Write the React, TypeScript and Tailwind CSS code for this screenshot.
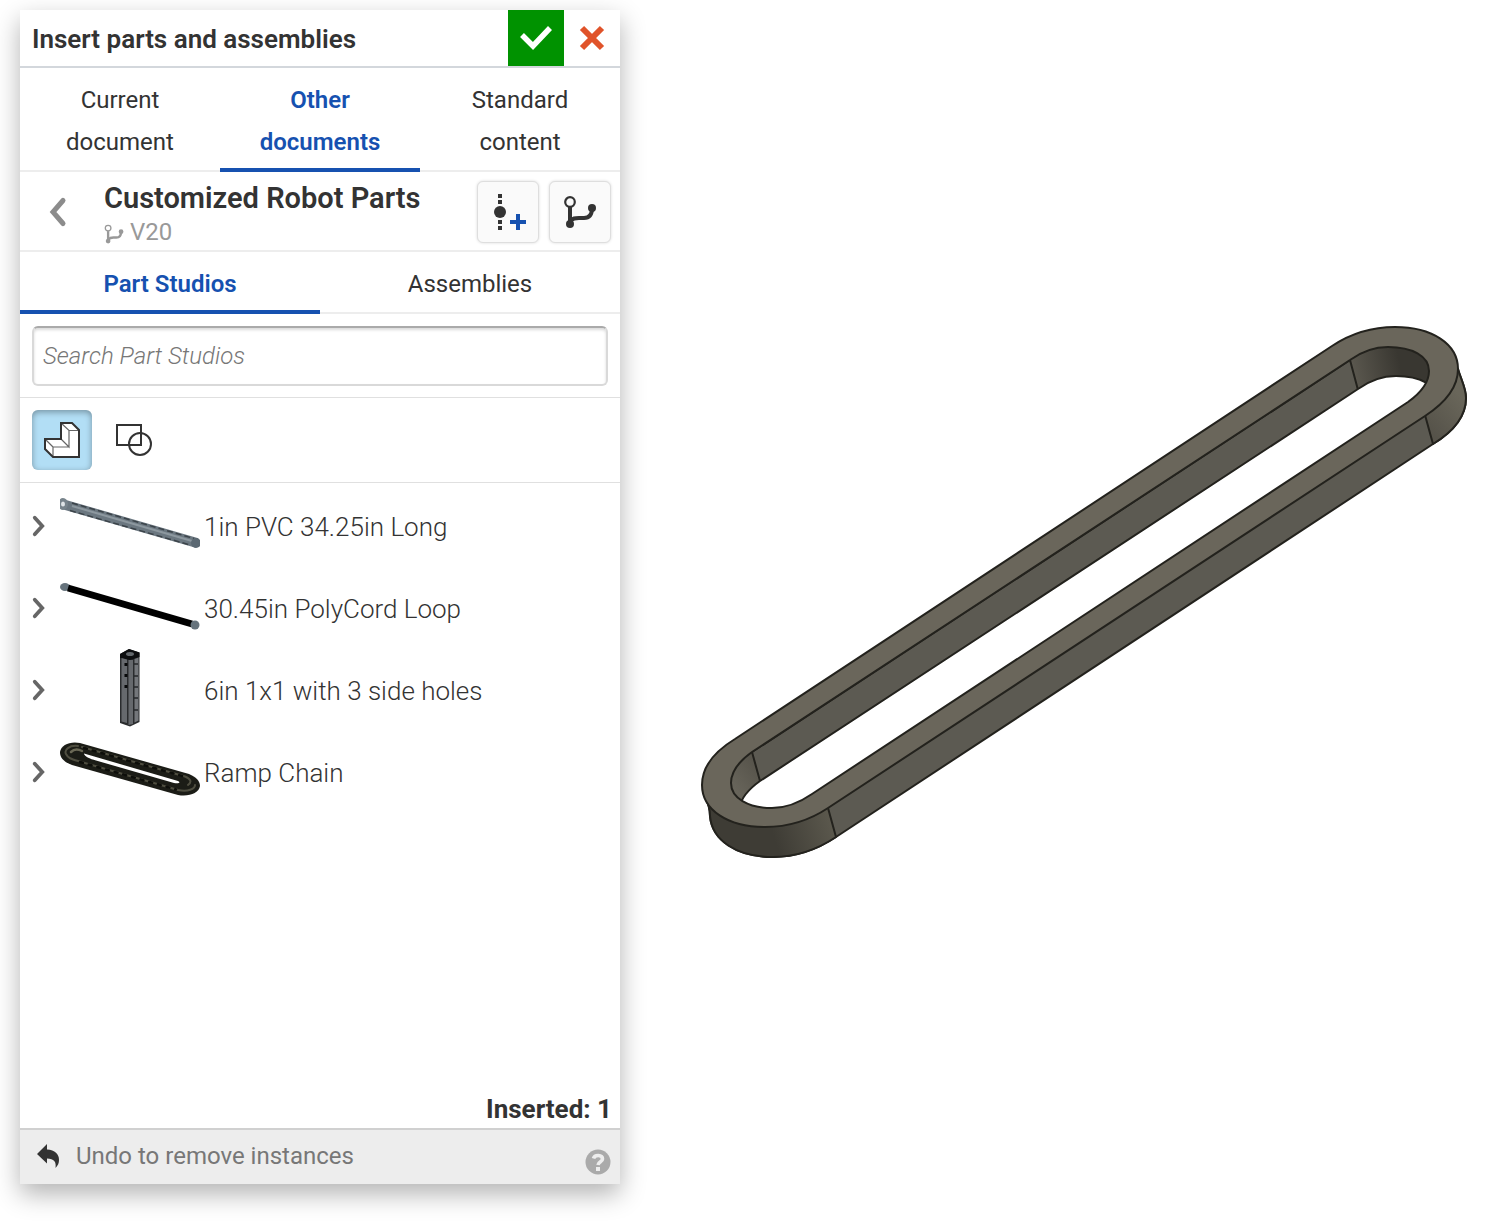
import React, { useState } from "react";

function CheckIcon() {
  return (
    <svg viewBox="0 0 56 56" className="size-14" aria-hidden="true">
      <path d="M14 25 25 36 42 18" fill="none" stroke="#fff" strokeWidth="5.500" />
    </svg>
  );
}

function CrossIcon() {
  return (
    <svg viewBox="0 0 56 56" className="size-14" aria-hidden="true">
      <path d="M18 18 38 38M38 18 18 38" stroke="#e0532a" strokeWidth="6" />
    </svg>
  );
}

function BranchIcon({ className }: { className?: string }) {
  return (
    <svg viewBox="0 0 32 34" className={className} fill="none" stroke="currentColor" aria-hidden="true">
      <circle cx="6" cy="7" r="4.800" strokeWidth="2.200" />
      <path d="M6 12V29" strokeWidth="4" />
      <path d="M6 26.500C9 23.200 11 23 15 23H20C25.500 23 28 20 28 13" strokeWidth="4" />
      <circle cx="6" cy="29" r="4" fill="currentColor" stroke="none" />
      <circle cx="28" cy="13" r="4" fill="currentColor" stroke="none" />
    </svg>
  );
}

function CreateVersionIcon() {
  return (
    <svg viewBox="0 0 60 60" className="size-[60px]" aria-hidden="true">
      <path d="M20 12h4v4h-4zM20 18h4v4h-4zM20 38h4v4h-4zM20 44h4v4h-4z" fill="#333" />
      <circle cx="22" cy="30" r="6" fill="#333" />
      <path d="M32 40H48M40 32V48" stroke="#1651b0" strokeWidth="4" />
    </svg>
  );
}

function PartIcon() {
  return (
    <svg viewBox="0 0 60 60" className="size-[60px]" aria-hidden="true" fill="none">
      <path d="M29 13H40L47 20V47H21L13 39V29H29Z" fill="#fff" />
      <path d="M29 13 37 20.500H47M37 20.500V37L29 29M37 37H21V47M21 37 13 29" stroke="#666" strokeWidth="1.200" />
      <path d="M29 13H40L47 20V47H21L13 39V29H29Z" stroke="#333" strokeWidth="2" />
    </svg>
  );
}

function SketchIcon() {
  return (
    <svg viewBox="0 0 60 60" className="size-[60px]" aria-hidden="true" fill="none" stroke="#333" strokeWidth="2">
      <path d="M13 15H37V35H13Z" />
      <circle cx="36" cy="34" r="11" />
    </svg>
  );
}

function Chevron({ className, d }: { className: string; d: string }) {
  return (
    <svg viewBox="0 0 20 32" className={className} aria-hidden="true">
      <path d={d} fill="none" stroke="currentColor" strokeLinecap="round" strokeWidth="5" />
    </svg>
  );
}

function PipeThumb() {
  return (
    <svg viewBox="0 0 140 82" className="h-[82px] w-[140px]" aria-hidden="true">
      <path d="M2 19 137 58" stroke="#6b7780" strokeWidth="10" />
      <path d="M12 21 132 56" stroke="#8d989f" strokeWidth="2" />
      <path d="M12 18 134 53.500M10 25.500 130 60" stroke="#30373c" strokeWidth="1.500" strokeDasharray="6 3" opacity=".8" />
      <ellipse cx="3" cy="19" rx="5" ry="6" fill="#77838b" />
      <ellipse cx="3" cy="19" rx="2" ry="2.500" fill="#dfe4e7" />
      <ellipse cx="136" cy="58" rx="5" ry="5" fill="#5b6872" />
    </svg>
  );
}

function CordThumb() {
  return (
    <svg viewBox="0 0 140 82" className="h-[82px] w-[140px]" aria-hidden="true">
      <ellipse cx="5" cy="20" rx="5" ry="4" fill="#66737c" />
      <path d="M8 21 132 57" stroke="#000" strokeWidth="7" />
      <ellipse cx="135" cy="58" rx="4.500" ry="4.500" fill="#66737c" />
    </svg>
  );
}

function TubeThumb() {
  return (
    <svg viewBox="0 0 140 82" className="h-[82px] w-[140px]" aria-hidden="true">
      <path d="M60 5 69 0 79.500 3.500V73L70 77.500 60 74Z" fill="#2a2c2e" />
      <path d="M60 5 69 0 79.500 3.500V8L70 11 60 9Z" fill="#0d0e0f" />
      <path d="M61.500 9 67 10.500V74L61.500 72.500ZM68.500 11H73V75L68.500 76Z" fill="#66696d" />
      <path d="M74.500 10 78.500 8.500V71.500L74.500 73.500Z" fill="#74777b" />
      <ellipse cx="70" cy="5" rx="4" ry="2" fill="#62676b" />
      <path d="M66 14v3M66 25v3M66 36v3" stroke="#08090a" strokeWidth="3" />
      <path d="M74 15h4M74 27h4M74 38h4M74 49h4M74 61h4" stroke="#26292b" strokeWidth="1.500" />
    </svg>
  );
}

function ChainThumb() {
  return (
    <svg viewBox="0 0 140 82" className="h-[82px] w-[140px]" aria-hidden="true" fill="none" strokeLinecap="round">
      <path d="M20 12 129 43C136 46 140 50 140 55C139 62 129 66 118 64L12 34C4 31 0 27 0 21C1 14 10 10 20 12Z" fill="#1b1c16" />
      <path d="M24 22.500 118 50C121 51.500 119 53 114 52L36 29.500C30 28 24 25 24 22.500Z" fill="#fff" />
      <path d="M18 15C9 14 4 19 6 23C8 27 11 28 18 30L118 59C128 61 135 58 135 54M22 16 125 45.500C131 48 132 51 128 54" stroke="#4f4e40" strokeWidth="2" />
      <path d="M11 21C14 18 18 18 22 20" stroke="#6a6855" strokeWidth="2.500" />
      <path d="M24 17 124 45.500M20 31 116 58.500" stroke="#0d0e0a" strokeWidth="2.500" strokeDasharray="3 6" />
    </svg>
  );
}

const OUTER =
  "M735 739C712 753 702 768 702 785C702 810 728 827 765 827C790 827 810 820 828 808L1425 416C1448 401 1458 386 1458 369C1458 344 1432 327 1395 327C1370 327 1350 334 1332 346Z";
const HOLE =
  "M752 752C738 762 731 772 731 783C731 798 748 808 772 808C786 808 799 803 812 794L1408 402C1422 392 1429 382 1429 371C1429 356 1412 347 1388 347C1374 347 1361 352 1350 360Z";

function ChainModel() {
  return (
    <svg viewBox="620 10 884 1174" className="h-auto w-full" role="img" aria-label="Ramp Chain preview">
      <defs>
        <clipPath id="hole">
          <path d={HOLE} />
        </clipPath>
        <linearGradient id="endLeft" gradientUnits="userSpaceOnUse" x1="775" y1="840" x2="832" y2="822">
          <stop offset="0" stopColor="#3e3c35" />
          <stop offset="1" stopColor="#5b584d" />
        </linearGradient>
        <linearGradient id="endRight" gradientUnits="userSpaceOnUse" x1="1430" y1="430" x2="1464" y2="400">
          <stop offset="0" stopColor="#56534a" />
          <stop offset="1" stopColor="#69665a" />
        </linearGradient>
        <linearGradient id="wallRight" gradientUnits="userSpaceOnUse" x1="1354" y1="375" x2="1400" y2="365">
          <stop offset="0" stopColor="#5a574e" />
          <stop offset="1" stopColor="#393731" />
        </linearGradient>
        <linearGradient id="wallLeft" gradientUnits="userSpaceOnUse" x1="732" y1="785" x2="757" y2="765">
          <stop offset="0" stopColor="#67645a" />
          <stop offset="1" stopColor="#57544b" />
        </linearGradient>
      </defs>
      <g stroke="#23221d" strokeWidth="2" strokeLinejoin="round">
        <path
          d="M704 795C708 802 710 808 710 816C712 840 736 857 773 857C798 857 818 849 836 837L1433 444C1456 430 1466 415 1466 398C1466 388 1461 380 1458 369L1100 560Z"
          fill="#5c5a52"
        />
        <path
          d="M704 795C708 802 710 808 710 816C712 840 736 857 773 857C798 857 818 849 836 837L828 808L765 800Z"
          fill="url(#endLeft)"
        />
        <path d="M1425 415 1433 444C1456 430 1466 415 1466 398C1466 388 1461 380 1458 369Z" fill="url(#endRight)" />
        <path d={OUTER} fill="#6a665b" />
        <g clipPath="url(#hole)">
          <path d={HOLE} fill="#5c5a52" />
          <path d="M1350 360 1358 390 1440 420V340H1350Z" fill="url(#wallRight)" />
          <path d="M752 752 760 781 740 815H725V752Z" fill="url(#wallLeft)" />
          <path d={HOLE} fill="#fff" transform="translate(8 29)" />
        </g>
        <path d={HOLE} fill="none" />
      </g>
    </svg>
  );
}

const PARTS = [
  { name: "1in PVC 34.25in Long", Thumb: PipeThumb },
  { name: "30.45in PolyCord Loop", Thumb: CordThumb },
  { name: "6in 1x1 with 3 side holes", Thumb: TubeThumb },
  { name: "Ramp Chain", Thumb: ChainThumb },
];

const SOURCES = ["Current document", "Other documents", "Standard content"];
const KINDS = ["Part Studios", "Assemblies"];

export default function App() {
  const [source, setSource] = useState(1);
  const [kind, setKind] = useState(0);

  return (
    <div className="flex min-h-screen bg-white pt-2.5 pb-10 pl-5 font-['Roboto',sans-serif] text-[#333]">
      <section
        aria-labelledby="dialog-title"
        className="flex w-[600px] shrink-0 flex-col bg-white shadow-[0_10px_24px_rgba(0,0,0,0.3)]"
      >
        <header className="flex items-center border-b-2 border-[#d3d7dc]">
          <h1 id="dialog-title" className="flex-1 pt-0.5 pl-3 text-[26px] leading-8 font-semibold">
            Insert parts and assemblies
          </h1>
          <button type="button" aria-label="Accept" className="bg-[#009200]">
            <CheckIcon />
          </button>
          <button type="button" aria-label="Cancel">
            <CrossIcon />
          </button>
        </header>

        <nav className="grid grid-cols-3 text-2xl" aria-label="Source">
          {SOURCES.map((label, i) => (
            <button
              key={label}
              type="button"
              onClick={() => setSource(i)}
              className={
                i === source
                  ? "h-[104px] border-b-4 border-[#1651b0] px-8 pt-1.5 leading-[42px] font-semibold text-[#1651b0]"
                  : "h-[104px] border-b-2 border-[#ededed] px-8 pt-1 leading-[42px]"
              }
            >
              {label}
            </button>
          ))}
        </nav>

        <div className="flex h-20 items-center border-b-2 border-[#ededed] pt-0.5 pr-[9px]">
          <button type="button" aria-label="Back" className="flex w-[84px] justify-center pr-2 text-[#8c8c8c]">
            <Chevron className="h-8 w-5" d="M15 4.500 5 16 15 27.500" />
          </button>
          <div className="flex-1 pt-1">
            <h2 className="text-[29px] leading-9 font-semibold">Customized Robot Parts</h2>
            <p className="flex items-center gap-1.5 text-2xl leading-8 text-[#999]">
              <BranchIcon className="mt-1 size-5" />
              V20
            </p>
          </div>
          <div className="flex gap-2.5">
            <button
              type="button"
              aria-label="Create version"
              className="flex size-[62px] items-center justify-center rounded-md border border-[#dedede] bg-[#fafafa] shadow-[0_0_3px_rgba(0,0,0,0.15)]"
            >
              <CreateVersionIcon />
            </button>
            <button
              type="button"
              aria-label="Choose version"
              className="flex size-[62px] items-center justify-center rounded-md border border-[#dedede] bg-[#fafafa] shadow-[0_0_3px_rgba(0,0,0,0.15)]"
            >
              <BranchIcon className="h-[34px] w-8" />
            </button>
          </div>
        </div>

        <nav className="grid grid-cols-2 text-2xl" aria-label="Element type">
          {KINDS.map((label, i) => (
            <button
              key={label}
              type="button"
              onClick={() => setKind(i)}
              className={
                i === kind
                  ? "h-[62px] border-b-4 border-[#1651b0] pt-1.5 font-semibold text-[#1651b0]"
                  : "h-[62px] border-b-2 border-[#ededed] pt-1"
              }
            >
              {label}
            </button>
          ))}
        </nav>

        <div className="border-b border-[#e0e0e0] px-3 pt-3 pb-[11px]">
          <input
            type="search"
            aria-label="Search Part Studios"
            placeholder="Search Part Studios"
            className="block h-[60px] w-full rounded-md border-2 border-[#d9d9d9] border-t-[#aaa] px-[9px] text-2xl font-light italic shadow-[inset_0_2px_3px_rgba(0,0,0,0.15)] placeholder:text-[#777]"
          />
        </div>

        <div className="flex gap-3 border-b border-[#e0e0e0] px-3 py-3">
          <button
            type="button"
            aria-label="Parts"
            aria-pressed="true"
            className="rounded-md bg-[#b2def5] shadow-[inset_0_2px_6px_rgba(0,0,0,0.35)]"
          >
            <PartIcon />
          </button>
          <button type="button" aria-label="Sketches" aria-pressed="false">
            <SketchIcon />
          </button>
        </div>

        <ul className="flex-1 pt-0.5">
          {PARTS.map(({ name, Thumb }) => (
            <li key={name}>
              <button type="button" className="flex w-full items-center text-left text-[26px] font-light">
                <span className="flex w-10 justify-center pr-1 text-[#666]">
                  <Chevron className="h-6 w-[15px]" d="M5 5 15 16 5 27" />
                </span>
                <Thumb />
                <span className="pt-0.5 pl-1">{name}</span>
              </button>
            </li>
          ))}
        </ul>

        <p className="pr-2 pb-[3px] text-right text-[26px] leading-8 font-bold">Inserted: 1</p>

        <footer className="flex h-14 items-center justify-between border-t-2 border-[#d0d0d0] bg-[#ededed] pr-[9px] pb-0.5 pl-4">
          <button type="button" className="flex items-center gap-4 text-2xl text-[#777]">
            <svg viewBox="0 0 24 24" className="size-6" aria-hidden="true">
              <path
                d="M1 10 11 0V5.500C19 6 23 10 23 16C23 19 22 21.500 19.500 24C20.500 18 18 14.500 11 14.500V19.500Z"
                fill="#333"
              />
            </svg>
            Undo to remove instances
          </button>
          <button type="button" aria-label="Help" className="mt-3">
            <svg viewBox="0 0 26 26" className="size-[26px]" aria-hidden="true">
              <circle cx="13" cy="13" r="12.500" fill="#aaa" />
              <path d="M8.500 9.500C9.500 5.500 17.500 5.500 17.500 10C17.500 13 13.500 12.500 13 16" fill="none" stroke="#ededed" strokeWidth="3.600" />
              <path d="M11 18h4v4h-4z" fill="#ededed" />
            </svg>
          </button>
        </footer>
      </section>

      <main className="min-w-0 flex-1">
        <ChainModel />
      </main>
    </div>
  );
}
